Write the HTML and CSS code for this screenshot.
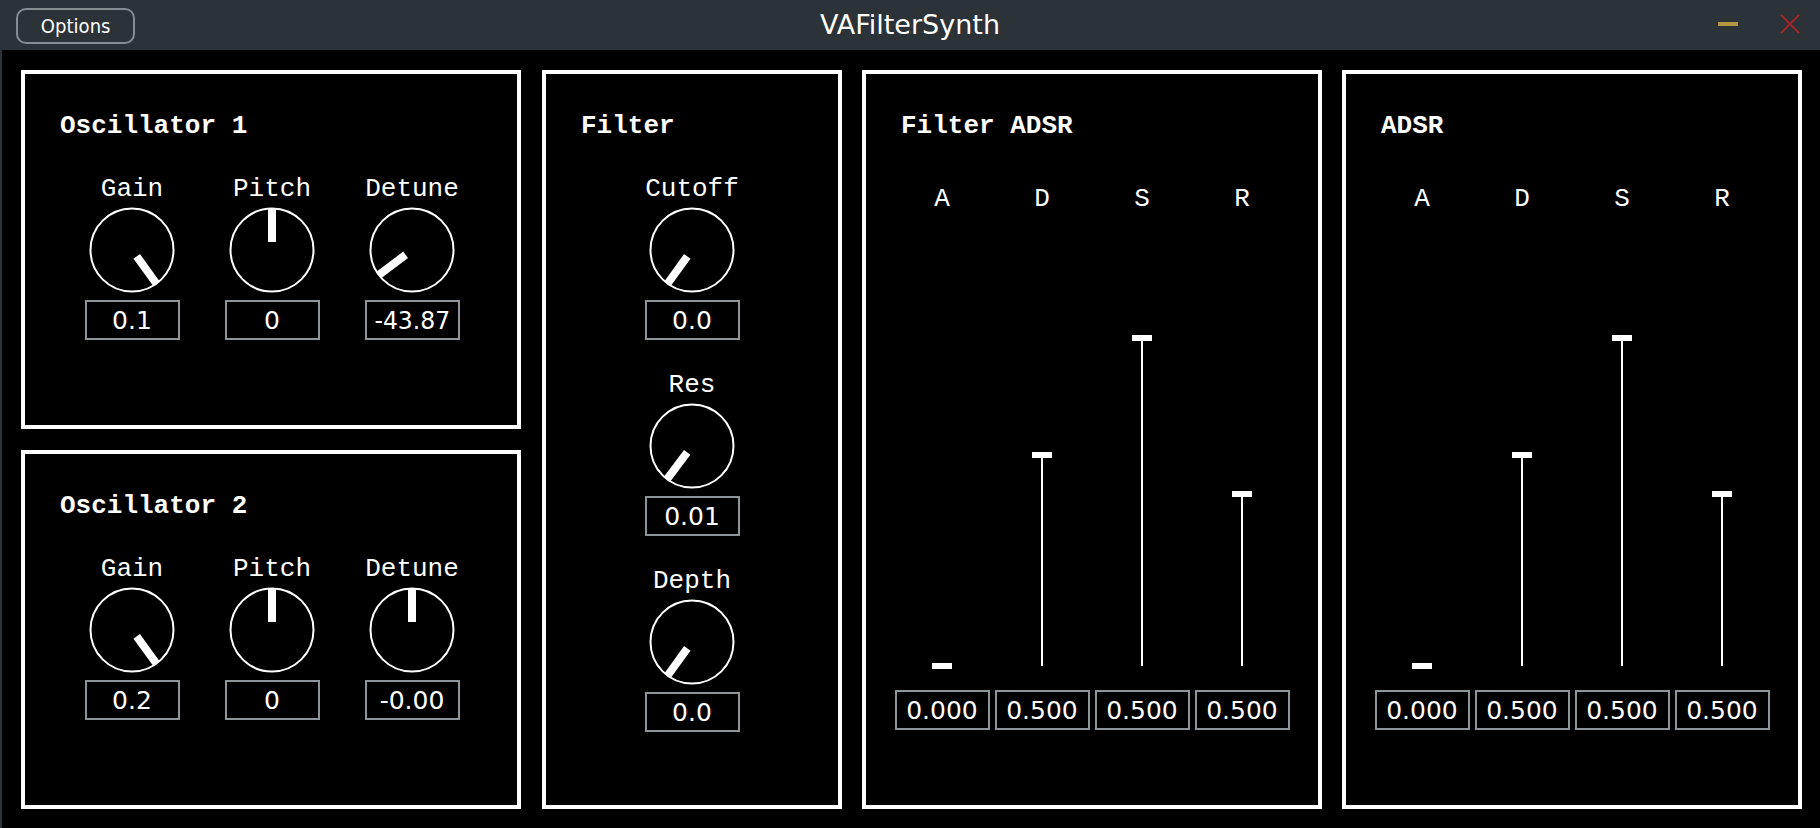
FILE: index.html
```html
<!DOCTYPE html>
<html lang="en">
<head>
<meta charset="utf-8">
<title>VAFilterSynth</title>
<link rel="stylesheet" href="styles.css">
</head>
<body>
<div class="window">
  <header class="titlebar">
    <div class="tb-left">
      <button class="opt-btn" type="button"><span class="opt-text">Options</span></button>
    </div>
    <div class="tb-title">VAFilterSynth</div>
    <div class="tb-right">
      <span class="win-min"></span>
      <svg class="win-close" viewBox="0 0 20 20" width="20" height="20">
        <line x1="1" y1="1" x2="19" y2="19"/>
        <line x1="19" y1="1" x2="1" y2="19"/>
      </svg>
    </div>
  </header>

  <main class="editor">
    <div class="col-osc">
      <section class="panel osc">
        <h2 class="panel-title">Oscillator 1</h2>
        <div class="knob-row">
          <div class="knob-group">
            <div class="knob-label">Gain</div>
            <svg class="knob" viewBox="0 0 86 86"><circle cx="43" cy="43" r="41.5"/><rect x="39" y="1" width="8" height="34" transform="rotate(144 43 43)"/></svg>
            <div class="value-box">0.1</div>
          </div>
          <div class="knob-group">
            <div class="knob-label">Pitch</div>
            <svg class="knob" viewBox="0 0 86 86"><circle cx="43" cy="43" r="41.5"/><rect x="39" y="1" width="8" height="34" transform="rotate(0 43 43)"/></svg>
            <div class="value-box">0</div>
          </div>
          <div class="knob-group">
            <div class="knob-label">Detune</div>
            <svg class="knob" viewBox="0 0 86 86"><circle cx="43" cy="43" r="41.5"/><rect x="39" y="1" width="8" height="34" transform="rotate(-127 43 43)"/></svg>
            <div class="value-box"><span class="squeeze">-43.87</span></div>
          </div>
        </div>
      </section>

      <section class="panel osc">
        <h2 class="panel-title">Oscillator 2</h2>
        <div class="knob-row">
          <div class="knob-group">
            <div class="knob-label">Gain</div>
            <svg class="knob" viewBox="0 0 86 86"><circle cx="43" cy="43" r="41.5"/><rect x="39" y="1" width="8" height="34" transform="rotate(144 43 43)"/></svg>
            <div class="value-box">0.2</div>
          </div>
          <div class="knob-group">
            <div class="knob-label">Pitch</div>
            <svg class="knob" viewBox="0 0 86 86"><circle cx="43" cy="43" r="41.5"/><rect x="39" y="1" width="8" height="34" transform="rotate(0 43 43)"/></svg>
            <div class="value-box">0</div>
          </div>
          <div class="knob-group">
            <div class="knob-label">Detune</div>
            <svg class="knob" viewBox="0 0 86 86"><circle cx="43" cy="43" r="41.5"/><rect x="39" y="1" width="8" height="34" transform="rotate(0 43 43)"/></svg>
            <div class="value-box">-0.00</div>
          </div>
        </div>
      </section>
    </div>

    <section class="panel filter">
      <h2 class="panel-title">Filter</h2>
      <div class="filter-knobs">
        <div class="knob-group">
          <div class="knob-label">Cutoff</div>
          <svg class="knob" viewBox="0 0 86 86"><circle cx="43" cy="43" r="41.5"/><rect x="39" y="1" width="8" height="34" transform="rotate(-144 43 43)"/></svg>
          <div class="value-box">0.0</div>
        </div>
        <div class="knob-group">
          <div class="knob-label">Res</div>
          <svg class="knob" viewBox="0 0 86 86"><circle cx="43" cy="43" r="41.5"/><rect x="39" y="1" width="8" height="34" transform="rotate(-143 43 43)"/></svg>
          <div class="value-box">0.01</div>
        </div>
        <div class="knob-group">
          <div class="knob-label">Depth</div>
          <svg class="knob" viewBox="0 0 86 86"><circle cx="43" cy="43" r="41.5"/><rect x="39" y="1" width="8" height="34" transform="rotate(-144 43 43)"/></svg>
          <div class="value-box">0.0</div>
        </div>
      </div>
    </section>

    <section class="panel adsr">
      <h2 class="panel-title">Filter ADSR</h2>
      <div class="adsr-cols">
        <div class="adsr-col">
          <div class="knob-label">A</div>
          <div class="slider"><div class="fill" style="height:0px"></div></div>
          <div class="value-box">0.000</div>
        </div>
        <div class="adsr-col">
          <div class="knob-label">D</div>
          <div class="slider"><div class="fill" style="height:211px"></div></div>
          <div class="value-box">0.500</div>
        </div>
        <div class="adsr-col">
          <div class="knob-label">S</div>
          <div class="slider"><div class="fill" style="height:328px"></div></div>
          <div class="value-box">0.500</div>
        </div>
        <div class="adsr-col">
          <div class="knob-label">R</div>
          <div class="slider"><div class="fill" style="height:172px"></div></div>
          <div class="value-box">0.500</div>
        </div>
      </div>
    </section>

    <section class="panel adsr">
      <h2 class="panel-title">ADSR</h2>
      <div class="adsr-cols">
        <div class="adsr-col">
          <div class="knob-label">A</div>
          <div class="slider"><div class="fill" style="height:0px"></div></div>
          <div class="value-box">0.000</div>
        </div>
        <div class="adsr-col">
          <div class="knob-label">D</div>
          <div class="slider"><div class="fill" style="height:211px"></div></div>
          <div class="value-box">0.500</div>
        </div>
        <div class="adsr-col">
          <div class="knob-label">S</div>
          <div class="slider"><div class="fill" style="height:328px"></div></div>
          <div class="value-box">0.500</div>
        </div>
        <div class="adsr-col">
          <div class="knob-label">R</div>
          <div class="slider"><div class="fill" style="height:172px"></div></div>
          <div class="value-box">0.500</div>
        </div>
      </div>
    </section>
  </main>
</div>
</body>
</html>
```

FILE: styles.css
```css
html, body {
  margin: 0;
  padding: 0;
  background: #000;
}

.window {
  width: 1820px;
  height: 828px;
  overflow: hidden;
  background: #000;
}

/* ---------- title bar ---------- */
.titlebar {
  height: 50px;
  background: #2b3238;
  display: grid;
  grid-template-columns: 1fr auto 1fr;
}

.tb-left {
  padding: 8px 0 0 16px;
}

.opt-btn {
  width: 119px;
  height: 36px;
  box-sizing: border-box;
  border: 2px solid #868d91;
  border-radius: 10px;
  background: #2b3238;
  color: #fff;
  padding: 0;
  display: flex;
  align-items: center;
  justify-content: center;
  font: 19px/1 "DejaVu Sans", sans-serif;
}

.opt-text {
  display: inline-block;
  transform: scaleX(0.95);
  margin-top: 1px;
}

.tb-title {
  color: #fff;
  font: 27px/50px "DejaVu Sans", sans-serif;
  white-space: nowrap;
}

.tb-right {
  display: flex;
  justify-content: flex-end;
  align-items: flex-start;
  gap: 42px;
  padding-right: 20px;
}

.win-min {
  width: 20px;
  height: 4px;
  margin-top: 22px;
  background: #b39540;
}

.win-close {
  margin-top: 14px;
  display: block;
}

.win-close line {
  stroke: #a3262a;
  stroke-width: 2;
}

/* ---------- editor ---------- */
.editor {
  height: 778px;
  box-sizing: border-box;
  border-left: 2px solid #2b3238;
  padding: 20px 0 0 19px;
  display: flex;
  align-items: flex-start;
  gap: 20px;
}

.col-osc {
  width: 500px;
  margin-right: 1px;
  display: flex;
  flex-direction: column;
  gap: 21px;
}

.panel {
  box-sizing: border-box;
  border: 4px solid #fff;
  background: #000;
  color: #fff;
}

.osc {
  height: 359px;
}

.filter {
  width: 300px;
  height: 739px;
}

.adsr {
  width: 460px;
  height: 739px;
}

.panel-title {
  margin: 0;
  padding: 37px 0 0 35px;
  font: bold 26px/30px "Liberation Mono", "Courier New", monospace;
  white-space: nowrap;
}

/* ---------- knobs ---------- */
.knob-row {
  display: flex;
  padding-left: 37px;
  margin-top: 33px;
}

.knob-group {
  width: 140px;
  display: flex;
  flex-direction: column;
  align-items: center;
}

.knob-label {
  height: 30px;
  font: 26px/30px "Liberation Mono", "Courier New", monospace;
  color: #fff;
  white-space: nowrap;
}

.knob {
  display: block;
  width: 86px;
  height: 86px;
  margin-top: 3px;
}

.knob circle {
  fill: none;
  stroke: #fff;
  stroke-width: 2;
}

.knob rect {
  fill: #fff;
}

.value-box {
  margin-top: 7px;
  width: 95px;
  height: 40px;
  box-sizing: border-box;
  border: 2px solid #8e9599;
  color: #fff;
  text-align: center;
  font: 25px/37px "DejaVu Sans", sans-serif;
  white-space: nowrap;
  overflow: hidden;
}

.squeeze {
  display: inline-block;
  transform: scaleX(0.94);
}

.filter-knobs {
  display: flex;
  flex-direction: column;
  align-items: center;
  gap: 30px;
  margin-top: 33px;
}

/* ---------- ADSR sliders ---------- */
.adsr-cols {
  display: flex;
  justify-content: center;
  margin-top: 43px;
}

.adsr-col {
  width: 100px;
  display: flex;
  flex-direction: column;
  align-items: center;
}

.slider {
  width: 20px;
  height: 452px;
  display: flex;
  flex-direction: column;
  justify-content: flex-end;
  align-items: center;
}

.fill {
  position: relative;
  width: 2px;
  background: #fff;
}

.fill::before {
  content: "";
  position: absolute;
  top: -3px;
  left: -9px;
  width: 20px;
  height: 6px;
  background: #fff;
}

.adsr-col .value-box {
  margin-top: 24px;
}
```
